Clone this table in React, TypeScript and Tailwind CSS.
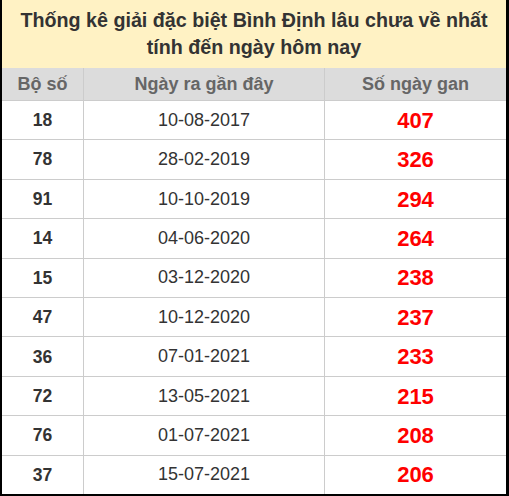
import React from 'react';

const rows = [
  ['18', '10-08-2017', '407'],
  ['78', '28-02-2019', '326'],
  ['91', '10-10-2019', '294'],
  ['14', '04-06-2020', '264'],
  ['15', '03-12-2020', '238'],
  ['47', '10-12-2020', '237'],
  ['36', '07-01-2021', '233'],
  ['72', '13-05-2021', '215'],
  ['76', '01-07-2021', '208'],
  ['37', '15-07-2021', '206'],
];

export default function App() {
  return (
    <div
      className="w-[509px] h-[496px] bg-black pl-[2px] pr-[3px] pb-[2px]"
      style={{ fontFamily: '"Liberation Sans", Arial, sans-serif' }}
    >
      <div className="h-full bg-white flex flex-col">
        <div className="h-[68px] bg-[#fff2c4] flex items-center justify-center text-center text-[19.7px] leading-[27px] font-bold text-[#333] px-2">
          Thống kê giải đặc biệt Bình Định lâu chưa về nhất
          <br />
          tính đến ngày hôm nay
        </div>
        <div className="grid grid-cols-[82px_241px_1fr] h-[33px] bg-[#dcdcdc] text-[#666] font-bold text-[18px] border-b border-[#ccc]">
          <div className="flex items-center justify-center border-r border-[#ccc]">Bộ số</div>
          <div className="flex items-center justify-center border-r border-[#ccc]">Ngày ra gần đây</div>
          <div className="flex items-center justify-center">Số ngày gan</div>
        </div>
        {rows.map(([n, d, g], i) => (
          <div
            key={n}
            className={`grid grid-cols-[82px_241px_1fr] flex-1 ${i < rows.length - 1 ? 'border-b border-[#ccc]' : ''}`}
          >
            <div className="flex items-center justify-center border-r border-[#ccc] font-bold text-[17.5px] text-[#333]">{n}</div>
            <div className="flex items-center justify-center border-r border-[#ccc] text-[18px] text-[#333]">{d}</div>
            <div className="flex items-center justify-center font-bold text-[22px] text-[#ff0000]">{g}</div>
          </div>
        ))}
      </div>
    </div>
  );
}
